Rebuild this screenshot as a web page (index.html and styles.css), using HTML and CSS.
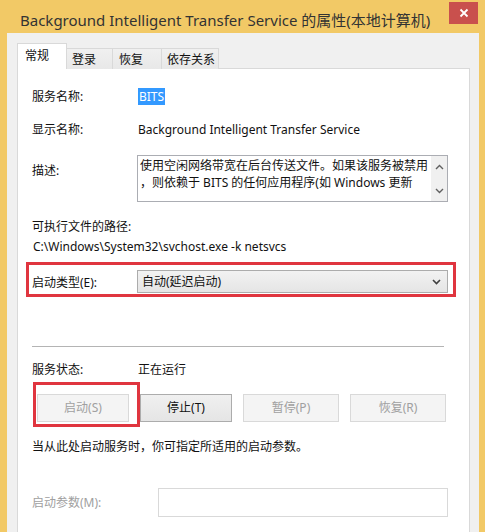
FILE: index.html
```html
<!DOCTYPE html>
<html lang="zh-CN">
<head>
    <meta charset="UTF-8">
    <title>BITS 属性</title>
    <link rel="stylesheet" href="styles.css">
</head>
<body>
<div class="win">
    <div class="win-title">
        <span class="win-title-text">Background Intelligent Transfer Service 的属性(本地计算机)</span>
        <span class="win-close">
            <svg width="10" height="10" viewBox="0 0 10 10"><path d="M1.5 1.5L8.5 8.5M8.5 1.5L1.5 8.5" stroke="#fff" stroke-width="1.8"/></svg>
        </span>
    </div>

    <div class="win-client">
        <div class="tabs">
            <span class="tab tab-active">常规</span>
            <span class="tab tab-login">登录</span>
            <span class="tab tab-recover">恢复</span>
            <span class="tab tab-deps">依存关系</span>
        </div>

        <div class="panel">
            <div class="row row-name">
                <span class="label">服务名称:</span>
                <span class="value"><span class="selected">BITS</span></span>
            </div>

            <div class="row row-display">
                <span class="label">显示名称:</span>
                <span class="value">Background Intelligent Transfer Service</span>
            </div>

            <div class="row row-desc">
                <span class="label">描述:</span>
                <div class="desc">
                    <div class="desc-text">
                        <div class="desc-line">使用空闲网络带宽在后台传送文件。如果该服务被禁用</div>
                        <div class="desc-line">，则依赖于 BITS 的任何应用程序(如 Windows 更新</div>
                    </div>
                    <div class="desc-scroll">
                        <svg width="9" height="6" viewBox="0 0 9 6"><path d="M1 5L4.5 1.5L8 5" fill="none" stroke="#606060" stroke-width="1.4"/></svg>
                        <svg width="9" height="6" viewBox="0 0 9 6"><path d="M1 1L4.5 4.5L8 1" fill="none" stroke="#606060" stroke-width="1.4"/></svg>
                    </div>
                </div>
            </div>

            <div class="row row-pathlabel">
                <span class="label">可执行文件的路径:</span>
            </div>
            <div class="row row-path">
                <span class="path">C:\Windows\System32\svchost.exe -k netsvcs</span>
            </div>

            <div class="mark-box">
                <span class="label">启动类型(E):</span>
                <div class="select">
                    <span>自动(延迟启动)</span>
                    <svg width="9" height="6" viewBox="0 0 9 6"><path d="M1 1L4.5 4.5L8 1" fill="none" stroke="#404040" stroke-width="1.6"/></svg>
                </div>
            </div>

            <div class="sep"></div>

            <div class="row row-status">
                <span class="label">服务状态:</span>
                <span class="value">正在运行</span>
            </div>

            <div class="btns">
                <span class="btn btn-disabled btn-s">启动(S)</span>
                <span class="btn btn-s">停止(T)</span>
                <span class="btn btn-disabled btn-l">暂停(P)</span>
                <span class="btn btn-disabled btn-l">恢复(R)</span>
                <span class="btn-mark"></span>
            </div>

            <div class="row row-hint">
                <span>当从此处启动服务时，你可指定所适用的启动参数。</span>
            </div>

            <div class="row row-params">
                <span class="label label-disabled">启动参数(M):</span>
                <span class="input"></span>
            </div>
        </div>
    </div>
</div>
</body>
</html>
```

FILE: styles.css
```css
*{ margin: 0; padding: 0; box-sizing: border-box;}
body{ font: 12px/20px "Noto Sans","Noto Sans CJK SC",sans-serif; color: #111; background: #f2c966;}

.win{ width: 485px; height: 532px; overflow: hidden; background: #f2c966; display: flex; flex-direction: column;}
.win-title{ height: 33px; display: flex; justify-content: space-between; align-items: flex-start; padding-left: 20px; flex-shrink: 0;}
.win-title-text{ font-size: 15px; line-height: 20px; margin-top: 10px; color: #333; white-space: nowrap;}
.win-close{ width: 29px; height: 22px; margin: 2px 7px 0 0; background: #c9504d; display: flex; align-items: center; justify-content: center;}

.win-client{ flex: 1; margin: 0 6px 0 7px; background: #f0f0f0; padding: 10px 9px 0 10px;}

/* tabs */
.tabs{ display: flex; align-items: flex-end; height: 26px; margin-bottom: -1px; position: relative; z-index: 1;}
.tab{ height: 21px; line-height: 21px; padding-left: 5px; border: 1px solid #d9d9d9; border-bottom: none; border-left: none; background: linear-gradient(#f0f0f0, #e8e8e8); color: #111;}
.tab-login{ width: 46px;}
.tab-recover{ width: 49px; padding-left: 6px;}
.tab-deps{ width: 57px; padding-left: 5px;}
.tab-active{ height: 26px; line-height: 24px; width: 50px; padding-left: 7px; background: #fff; border-left: 1px solid #d9d9d9;}

.panel{ height: 470px; background: #fff; border: 1px solid #d9d9d9; padding: 18px 0 0 14px;}

.row{ display: flex; align-items: center; height: 20px;}
.label{ width: 106px; flex-shrink: 0; white-space: nowrap;}
.label-disabled{ color: #a0a0a0;}
.value{ white-space: nowrap;}
.selected{ display: inline-block; height: 17px; line-height: 17px; padding: 0 1px; background: #3399ff; color: #fff;}

.row-display{ margin-top: 13px;}

.row-desc{ margin-top: 15px; height: 47px; align-items: flex-start;}
.row-desc .label{ margin-top: 6px;}
.desc{ width: 311px; height: 47px; margin-left: -1px; border: 1px solid #abadb3; display: flex;}
.desc-text{ flex: 1; padding: 1px 0 0 2px; overflow: hidden;}
.desc-line{ height: 17px; line-height: 17px; white-space: nowrap;}
.desc-scroll{ width: 16px; background: #f0f0f0; display: flex; flex-direction: column; justify-content: space-between; align-items: center; padding: 8px 0 7px;}

.row-pathlabel{ margin-top: 15px;}
.path{ white-space: nowrap; padding-left: 1px;}

/* red annotation round the start type */
.mark-box{ margin: 5px 0 0 -6px; width: 430px; height: 35px; border: 3px solid #e0353f; display: flex; align-items: flex-end; padding: 0 5px 1px 3px;}
.select{ flex: 1; height: 23px; margin-left: -1px; border: 1px solid #acacac; background: linear-gradient(#f2f2f2, #e5e5e5); display: flex; justify-content: space-between; align-items: center; padding: 0 6px 0 4px;}

.sep{ margin-top: 49px; width: 412px; height: 1px; background: #b4b4b4;}

.row-status{ margin-top: 13px;}

.btns{ position: relative; display: flex; gap: 11px; height: 28px; margin: 14px 0 0 5px;}
.btn{ height: 28px; border: 1px solid #acacac; background: linear-gradient(#f0f0f0, #e5e5e5); display: flex; align-items: center; justify-content: center;}
.btn-s{ width: 92px;}
.btn-l{ width: 96px;}
.btn-disabled{ border-color: #d9d9d9; background: #f4f4f4; color: #a0a0a0;}
.btn-mark{ position: absolute; left: -4px; top: -12px; width: 107px; height: 45px; border: 3px solid #e0353f;}

.row-hint{ margin-top: 15px;}

.row-params{ margin-top: 31px; height: 29px;}
.row-params .label{ width: 126px;}
.input{ width: 290px; height: 29px; border: 1px solid #d9d9d9; background: #fff;}
```
